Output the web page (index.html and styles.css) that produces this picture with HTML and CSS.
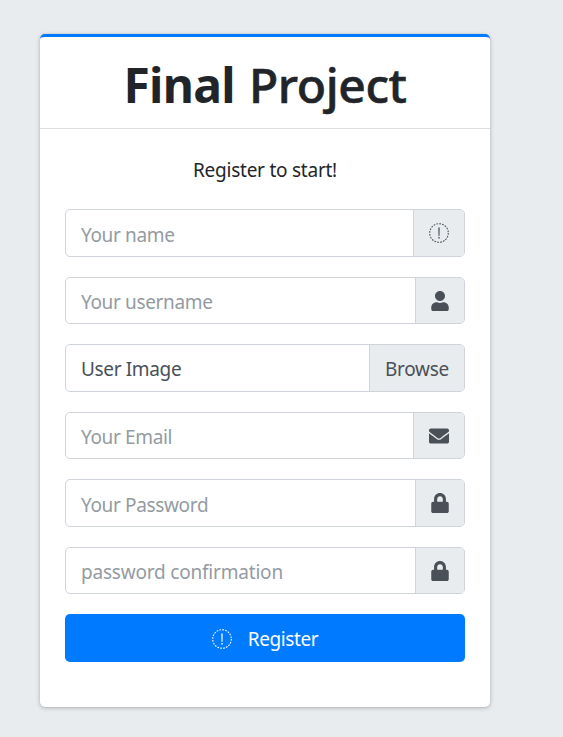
FILE: index.html
```
<!DOCTYPE html>
<html lang="en">
<head>
<meta charset="utf-8">
<title>Final Project</title>
<link rel="stylesheet" href="styles.css">
</head>
<body>
<svg class="defs" width="0" height="0">
  <symbol id="notice" viewBox="0 0 20 20">
    <circle cx="10" cy="10" r="9.300" fill="none" stroke="currentColor" stroke-width="1.100" stroke-dasharray="1.700 1.220"/>
    <path d="M9.300 4.500h1.400l-.2 8.500h-1zM9.300 14h1.400v1.400H9.300z" fill="currentColor"/>
  </symbol>
  <symbol id="user" viewBox="0 0 448 512">
    <path fill="currentColor" d="M224 256c70.700 0 128-57.300 128-128S294.700 0 224 0 96 57.300 96 128s57.300 128 128 128zm89.600 32h-16.700c-22.200 10.200-46.900 16-72.900 16s-50.600-5.800-72.900-16h-16.700C60.200 288 0 348.200 0 422.400V464c0 26.500 21.500 48 48 48h352c26.500 0 48-21.500 48-48v-41.600c0-74.200-60.200-134.400-134.400-134.400z"/>
  </symbol>
  <symbol id="mail" viewBox="0 0 512 512">
    <path fill="currentColor" d="M502.300 190.800c3.900-3.100 9.700-.2 9.700 4.700V400c0 26.500-21.500 48-48 48H48c-26.500 0-48-21.500-48-48V195.600c0-5 5.700-7.800 9.700-4.700 22.400 17.400 52.100 39.500 154.100 113.600 21.100 15.400 56.700 47.800 92.200 47.600 35.700.3 72-32.800 92.300-47.600 102-74.100 131.600-96.300 154-113.700zM256 320c23.200.4 56.600-29.200 73.400-41.400 132.700-96.300 142.800-104.700 173.400-128.700 5.800-4.500 9.200-11.500 9.200-18.900v-19c0-26.500-21.500-48-48-48H48c-26.500 0-48 21.500-48 48v19c0 7.400 3.400 14.300 9.200 18.900 30.600 23.900 40.700 32.400 173.400 128.700 16.800 12.200 50.200 41.800 73.400 41.400z"/>
  </symbol>
  <symbol id="lock" viewBox="0 0 448 512">
    <path fill="currentColor" d="M400 224h-24v-72C376 68.200 307.800 0 224 0S72 68.200 72 152v72H48c-26.500 0-48 21.500-48 48v192c0 26.500 21.500 48 48 48h352c26.500 0 48-21.500 48-48V272c0-26.500-21.500-48-48-48zm-104 0H152v-72c0-39.700 32.300-72 72-72s72 32.300 72 72v72z"/>
  </symbol>
</svg>
<main class="card">
  <header class="card-header"><h1 class="brand"><b>Final</b> <span>Project</span></h1></header>
  <form class="card-body">
    <p class="intro">Register to start!</p>
    <div class="group"><input class="name" type="text" placeholder="Your name"><span class="addon"><svg width="20" height="20"><use href="#notice"/></svg></span></div>
    <div class="group"><input class="username" type="text" placeholder="Your username"><span class="addon"><svg width="18" height="20"><use href="#user"/></svg></span></div>
    <label class="group file"><span class="file-name">User Image</span><span class="addon browse">Browse</span></label>
    <div class="group"><input class="email" type="email" placeholder="Your Email"><span class="addon"><svg width="20" height="20"><use href="#mail"/></svg></span></div>
    <div class="group"><input class="password" type="password" placeholder="Your Password"><span class="addon"><svg width="18" height="20"><use href="#lock"/></svg></span></div>
    <div class="group"><input class="confirm" type="password" placeholder="password confirmation"><span class="addon"><svg width="18" height="20"><use href="#lock"/></svg></span></div>
    <button class="submit" type="button"><svg width="20" height="20"><use href="#notice"/></svg><span>Register</span></button>
  </form>
</main>
</body>
</html>
```
FILE: styles.css
```
* { box-sizing: border-box; }
body {
  margin: 0;
  min-height: 737px;
  padding: 33.500px 0 0 40px;
  background: #e9ecef;
  color: #212529;
  font: 19px/30px "Noto Sans", "Open Sans", sans-serif;
}
.defs { position: absolute; }
.card {
  width: 450px;
  height: 673.500px;
  background: #fff;
  border-top: 3.750px solid #007bff;
  border-radius: 5px;
  box-shadow: 0 0 1px rgba(0, 0, 0, .13), 0 1px 4px rgba(0, 0, 0, .25);
}
.card-header {
  height: 92px;
  border-bottom: 1px solid #dfdfdf;
  text-align: center;
}
.brand {
  margin: 0;
  padding-top: 18px;
  font-size: 48px;
  line-height: 60px;
  font-weight: 500;
  letter-spacing: -.4px;
  word-spacing: 2px;
}
.brand b { font-weight: 700; letter-spacing: -.700px; }
.brand span { -webkit-text-stroke: .6px currentColor; }
.card-body { padding: 26px 25px 0; }
.intro {
  margin: 0 0 24.500px;
  text-align: center;
  letter-spacing: -.240px;
}
.group {
  display: flex;
  height: 47.500px;
  margin-bottom: 20px;
  border: 1px solid #ced4da;
  border-radius: 5px;
  overflow: hidden;
  color: #495057;
}
.group input {
  flex: 1;
  min-width: 0;
  padding: 4px 15px 0;
  border: 0;
  background: none;
  outline: 0;
  font: inherit;
  letter-spacing: -.350px;
}
.group .confirm { letter-spacing: -.200px; }
.group input::placeholder { color: #939ba2; opacity: 1; }
.addon {
  display: flex;
  align-items: center;
  padding: 1px 15px 0;
  background: #e9ecef;
  border-left: 1px solid #ced4da;
}
.file-name { flex: 1; padding: 9px 15px 0; letter-spacing: -.350px; }
.browse { letter-spacing: -.280px; padding-top: 2px; }
.submit {
  display: flex;
  width: 100%;
  height: 47.500px;
  align-items: center;
  justify-content: center;
  gap: 16px;
  padding: 2px 0 0;
  border: 0;
  border-radius: 5px;
  background: #007bff;
  color: #fff;
  font: inherit;
  letter-spacing: -.400px;
}
```
